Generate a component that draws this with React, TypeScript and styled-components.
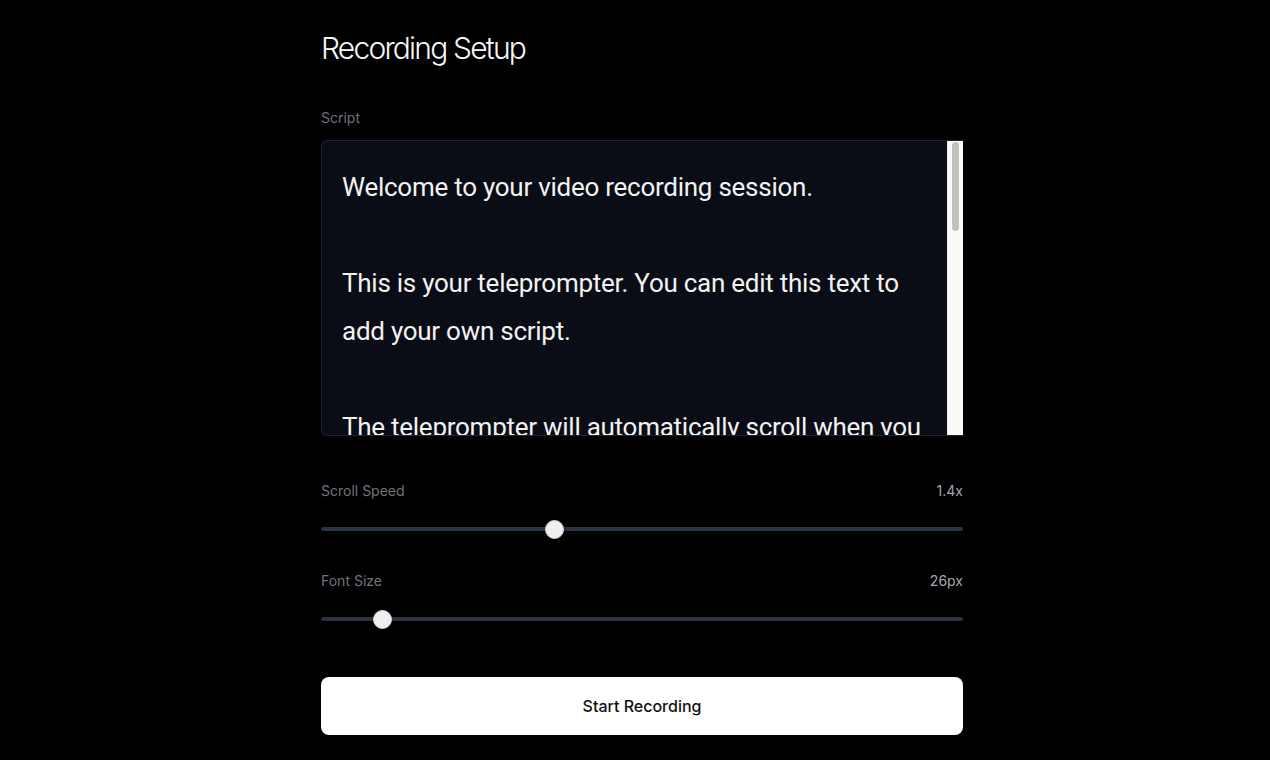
import React, { useState } from "react";
import styled, { createGlobalStyle } from "styled-components";

const GlobalStyle = createGlobalStyle`
  html, body {
    margin: 0;
    padding: 0;
    background: #000;
    height: 100%;
  }
  body {
    font-family: Inter, "Noto Sans", "Liberation Sans", sans-serif;
    color: #f5f5f5;
    -webkit-font-smoothing: antialiased;
  }
  * { box-sizing: border-box; }
`;

const Page = styled.div`
  min-height: 760px;
  display: flex;
  justify-content: center;
  padding: 30px 0 0 14px;
  background: #000;
`;

const Panel = styled.main`
  width: 642px;
  display: flex;
  flex-direction: column;
`;

const Title = styled.h1`
  margin: 0;
  font-size: 30px;
  line-height: 36px;
  font-weight: 300;
  letter-spacing: -0.06em;
  color: #f7f7f7;
`;

const Field = styled.section<{ $top: number }>`
  display: flex;
  flex-direction: column;
  margin-top: ${(p) => p.$top}px;
`;

const LabelRow = styled.div`
  display: flex;
  justify-content: space-between;
  align-items: center;
  height: 20px;
`;

const Label = styled.label`
  font-size: 14px;
  line-height: 20px;
  color: #6f737c;
`;

const Value = styled.span`
  font-size: 14px;
  line-height: 20px;
  color: #a6a8ad;
`;

const ScriptBox = styled.div`
  margin-top: 12px;
  height: 296px;
  display: flex;
  border: 1px solid #1d2330;
  border-right: none;
  border-radius: 6px 0 0 6px;
  background: #0a0d15;
  overflow: hidden;
`;

const ScriptArea = styled.textarea<{ $size: number }>`
  flex: 1;
  height: 100%;
  resize: none;
  padding: 22px 20px 0 20px;
  border: none;
  background: transparent;
  color: #f2f2f2;
  font-family: Roboto, "Liberation Sans", sans-serif;
  font-size: ${(p) => p.$size}px;
  letter-spacing: -0.01em;
  line-height: 48px;
  outline: none;
  overflow: hidden;
`;

const ScrollTrack = styled.div`
  width: 16px;
  flex: none;
  background: #fafafa;
  border-left: 1px solid #ededed;
  padding: 1px 4px 0 4px;
`;

const ScrollThumb = styled.div`
  height: 89px;
  border-radius: 5px;
  background: #c1c1c1;
`;

const Range = styled.input.attrs({ type: "range" })`
  -webkit-appearance: none;
  appearance: none;
  width: 100%;
  height: 18px;
  margin: 19px 0 0;
  background: transparent;
  cursor: pointer;

  &::-webkit-slider-runnable-track {
    height: 4px;
    border-radius: 2px;
    background: #2a3343;
  }
  &::-webkit-slider-thumb {
    -webkit-appearance: none;
    appearance: none;
    width: 19px;
    height: 19px;
    margin-top: -7.5px;
    border-radius: 50%;
    background: #efefef;
    border: 1px solid #d6d6d6;
  }
  &:focus {
    outline: none;
  }
`;

const StartButton = styled.button`
  margin-top: 49px;
  height: 58px;
  width: 100%;
  border: none;
  border-radius: 8px;
  background: #ffffff;
  color: #111111;
  font-family: Inter, "Noto Sans", "Liberation Sans", sans-serif;
  font-size: 16px;
  font-weight: 500;
  cursor: pointer;
`;

const defaultScript = `Welcome to your video recording session.

This is your teleprompter. You can edit this text to add your own script.

The teleprompter will automatically scroll when you start recording. You can adjust the scroll speed and the font size using the controls below.

Tips for a great recording:
- Look directly at the camera
- Speak clearly and at a steady pace
- Take a deep breath before you begin
- Smile and be yourself

Good luck with your recording!`;

export default function App() {
  const [script, setScript] = useState(defaultScript);
  const [speed, setSpeed] = useState(1.4);
  const [fontSize, setFontSize] = useState(26);

  return (
    <>
      <GlobalStyle />
      <Page>
        <Panel>
          <Title>Recording Setup</Title>

          <Field $top={42}>
            <LabelRow>
              <Label htmlFor="script">Script</Label>
            </LabelRow>
            <ScriptBox>
              <ScriptArea
                id="script"
                $size={fontSize}
                value={script}
                onChange={(e) => setScript(e.target.value)}
              />
              <ScrollTrack>
                <ScrollThumb />
              </ScrollTrack>
            </ScriptBox>
          </Field>

          <Field $top={45}>
            <LabelRow>
              <Label htmlFor="speed">Scroll Speed</Label>
              <Value>{speed.toFixed(1)}x</Value>
            </LabelRow>
            <Range
              id="speed"
              min={0.5}
              max={3}
              step={0.1}
              value={speed}
              onChange={(e) => setSpeed(parseFloat(e.target.value))}
            />
          </Field>

          <Field $top={33}>
            <LabelRow>
              <Label htmlFor="font">Font Size</Label>
              <Value>{fontSize}px</Value>
            </LabelRow>
            <Range
              id="font"
              min={24}
              max={48}
              step={1}
              value={fontSize}
              onChange={(e) => setFontSize(parseInt(e.target.value, 10))}
            />
          </Field>

          <StartButton type="button">Start Recording</StartButton>
        </Panel>
      </Page>
    </>
  );
}
